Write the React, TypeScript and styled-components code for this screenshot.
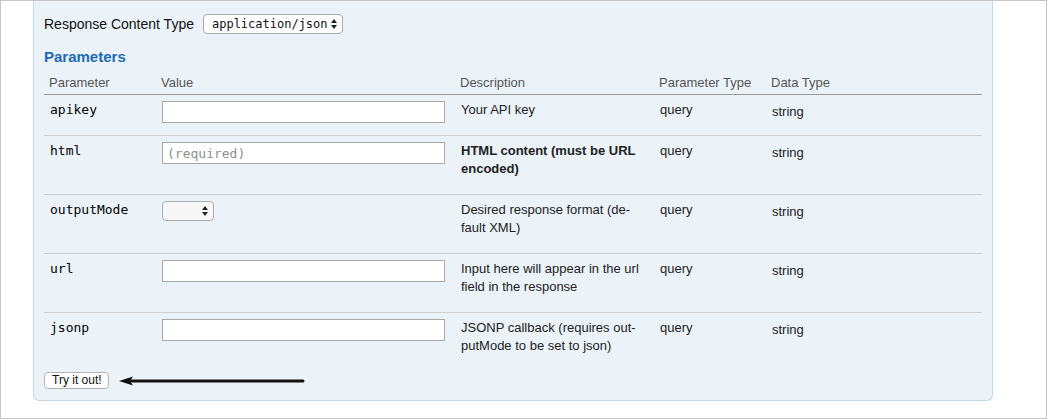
import React from "react";
import styled, { createGlobalStyle } from "styled-components";

const GlobalStyle = createGlobalStyle`
  body {
    margin: 0;
    background: #ffffff;
    font-family: "Liberation Sans", Arial, sans-serif;
  }
`;

type Param = {
  name: string;
  field: "input" | "required" | "select";
  desc: string[];
  bold?: boolean;
};

const params: Param[] = [
  { name: "apikey", field: "input", desc: ["Your API key"] },
  { name: "html", field: "required", desc: ["HTML content (must be URL", "encoded)"], bold: true },
  { name: "outputMode", field: "select", desc: ["Desired response format (de-", "fault XML)"] },
  { name: "url", field: "input", desc: ["Input here will appear in the url", "field in the response"] },
  { name: "jsonp", field: "input", desc: ["JSONP callback (requires out-", "putMode to be set to json)"] },
];

const Arrows = () => (
  <svg width="6" height="10" viewBox="0 0 6 10">
    <polygon points="0,4 3,0 6,4" fill="#222" />
    <polygon points="0,6 3,10 6,6" fill="#222" />
  </svg>
);

const App = () => {
  return (
    <>
      <GlobalStyle />
      <Frame>
        <Panel>
          <ContentTypeRow>
            <span>Response Content Type</span>
            <SelectBox $width={140}>
              <span>application/json</span>
              <Arrows />
            </SelectBox>
          </ContentTypeRow>

          <Heading>Parameters</Heading>

          <Table>
            <HeaderRow>
              <HeadCell>Parameter</HeadCell>
              <HeadCell>Value</HeadCell>
              <HeadCell>Description</HeadCell>
              <HeadCell>Parameter Type</HeadCell>
              <HeadCell>Data Type</HeadCell>
            </HeaderRow>
            {params.map((p) => (
              <BodyRow key={p.name}>
                <NameCell>{p.name}</NameCell>
                <Cell>
                  {p.field === "select" ? (
                    <SelectBox $width={52} $muted>
                      <span />
                      <Arrows />
                    </SelectBox>
                  ) : (
                    <TextInput placeholder={p.field === "required" ? "(required)" : ""} />
                  )}
                </Cell>
                <DescCell $bold={p.bold}>
                  {p.desc.map((line) => (
                    <div key={line}>{line}</div>
                  ))}
                </DescCell>
                <Cell>query</Cell>
                <TypeCell>string</TypeCell>
              </BodyRow>
            ))}
          </Table>

          <ActionRow>
            <TryButton>Try it out!</TryButton>
            <svg width="186" height="12" viewBox="0 0 186 12">
              <path d="M0 6 L14 1.5 L11 6 L14 10.5 Z" fill="#111" />
              <line x1="11" y1="6" x2="184" y2="6" stroke="#111" strokeWidth="3" strokeLinecap="round" />
            </svg>
          </ActionRow>
        </Panel>
      </Frame>
    </>
  );
};

export default App;

const Frame = styled.div`
  width: 1047px;
  height: 419px;
  box-sizing: border-box;
  border: 1px solid #c6c6c6;
  overflow: hidden;
  padding-left: 32px;
`;

const Panel = styled.div`
  width: 960px;
  box-sizing: border-box;
  background: #ebf3f9;
  border: 1px solid #c3d9ec;
  border-top: none;
  border-radius: 0 0 6px 6px;
  padding: 13px 10px 11px;
`;

const ContentTypeRow = styled.div`
  display: flex;
  align-items: center;
  gap: 9px;
  height: 20px;
  font-size: 14px;
  color: #111;
`;

const SelectBox = styled.div<{ $width: number; $muted?: boolean }>`
  width: ${(p) => p.$width}px;
  height: 20px;
  box-sizing: border-box;
  display: flex;
  align-items: center;
  justify-content: space-between;
  padding: 0 5px 0 8px;
  border: 1px solid #ababab;
  border-radius: 4px;
  background: ${(p) => (p.$muted ? "#f7f7f7" : "#ffffff")};
  font-family: "DejaVu Sans Mono", Menlo, monospace;
  font-size: 12px;
  color: #111;
`;

const Heading = styled.h4`
  margin: 14px 0 0;
  font-size: 15px;
  line-height: 18px;
  font-weight: bold;
  color: #1b6bb5;
`;

const Table = styled.div`
  margin-top: 8px;
  font-size: 13px;
  line-height: 18px;
`;

const Columns = styled.div`
  display: grid;
  grid-template-columns: 112px 299px 199px 112px 1fr;
`;

const HeaderRow = styled(Columns)`
  padding-bottom: 2px;
  border-bottom: 1px solid #999999;
  color: #555555;
`;

const HeadCell = styled.div`
  padding-left: 5px;
`;

const BodyRow = styled(Columns)`
  padding-top: 6px;
  color: #222222;
  border-bottom: 1px solid #cfcfcf;

  &:last-child {
    border-bottom: none;
  }
`;

const Cell = styled.div`
  padding-left: 6px;
`;

const NameCell = styled(Cell)`
  font-family: "DejaVu Sans Mono", Menlo, monospace;
  color: #000;
`;

const DescCell = styled(Cell)<{ $bold?: boolean }>`
  padding-bottom: 16px;
  white-space: nowrap;
  font-weight: ${(p) => (p.$bold ? "bold" : "normal")};
`;

const TypeCell = styled(Cell)`
  padding-top: 2px;
`;

const TextInput = styled.input`
  display: block;
  width: 283px;
  height: 22px;
  box-sizing: border-box;
  margin: 0;
  padding: 0 4px;
  border: 1px solid #a9a9a9;
  border-radius: 0;
  background: #fff;
  font-family: "DejaVu Sans Mono", Menlo, monospace;
  font-size: 13px;
  outline: none;

  &::placeholder {
    color: #8f8f8f;
  }
`;

const ActionRow = styled.div`
  display: flex;
  align-items: center;
  gap: 10px;
  margin-top: 1px;
`;

const TryButton = styled.button`
  height: 17px;
  box-sizing: border-box;
  padding: 0 6px 0 7px;
  border: 1px solid #b3b3b3;
  border-radius: 4px;
  background: #ffffff;
  font-family: "Liberation Sans", Arial, sans-serif;
  font-size: 12px;
  line-height: 15px;
  color: #111;
`;
